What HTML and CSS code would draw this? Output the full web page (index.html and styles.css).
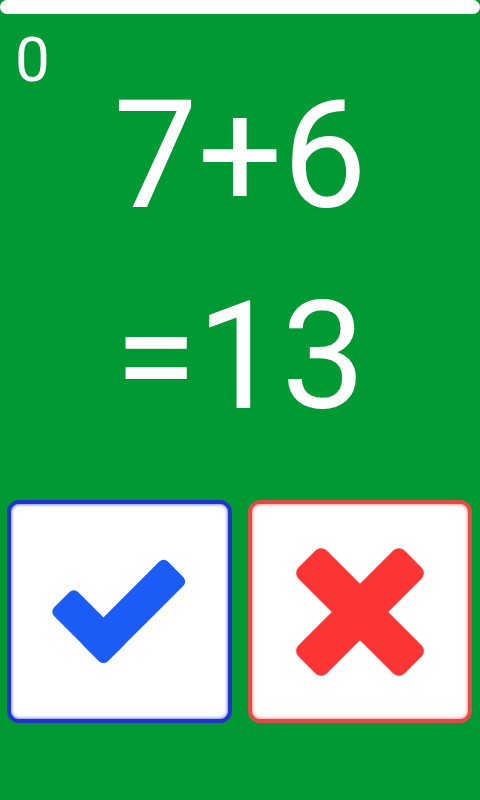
FILE: index.html
```html
<!DOCTYPE html>
<html>
<head>
<meta charset="utf-8">
<link rel="stylesheet" href="styles.css">
</head>
<body>
<div class="screen">
  <div class="timer"></div>
  <div class="score">0</div>
  <div class="equation">7+6</div>
  <div class="equation result">=13</div>
  <div class="answers">
    <button class="answer yes" type="button" aria-label="Correct">
      <svg width="200" height="200" viewBox="-100 -100 200 200">
        <g transform="translate(-16.5 29.5)" fill="#1c5cf6">
          <rect x="-17" y="-17" width="76" height="34" rx="6" transform="rotate(-135)"/>
          <rect x="-17" y="-17" width="119" height="34" rx="6" transform="rotate(-45)"/>
        </g>
      </svg>
    </button>
    <button class="answer no" type="button" aria-label="Wrong">
      <svg width="200" height="200" viewBox="-100 -100 200 200">
        <g fill="#fe3535">
          <rect x="-75" y="-20" width="150" height="40" rx="8" transform="rotate(45)"/>
          <rect x="-75" y="-20" width="150" height="40" rx="8" transform="rotate(-45)"/>
        </g>
      </svg>
    </button>
  </div>
</div>
</body>
</html>
```
FILE: styles.css
```css
html, body {
  margin: 0;
  padding: 0;
  background: #009933;
}
.screen {
  width: 480px;
  height: 800px;
  display: flex;
  flex-direction: column;
  font-family: Roboto, "Noto Sans", sans-serif;
  color: #ffffff;
  overflow: hidden;
}
.timer {
  height: 14px;
  background: #ffffff;
  border-radius: 7px;
}
.score {
  margin: 30px 0 5px 15px;
  font-size: 62px;
  line-height: 32px;
  height: 32px;
}
.equation {
  font-size: 150px;
  line-height: 150px;
  height: 150px;
  text-align: center;
}
.result {
  margin-top: 51px;
}
.answers {
  margin-top: 68px;
  display: grid;
  grid-template-columns: 225px 224px;
  column-gap: 16px;
  padding-left: 7px;
}
.answer {
  height: 223px;
  margin: 0;
  padding: 0;
  background: #ffffff;
  border-radius: 12px;
  display: flex;
  align-items: center;
  justify-content: center;
  overflow: hidden;
  cursor: pointer;
}
.yes {
  border: 4px solid #2035c8;
  box-shadow: inset 0 0 3px 1px #7d8ce6;
}
.no {
  border: 4px solid #e24a45;
  box-shadow: inset 0 0 3px 1px #f09a96;
}
.answer svg {
  flex: none;
  overflow: visible;
}
```
